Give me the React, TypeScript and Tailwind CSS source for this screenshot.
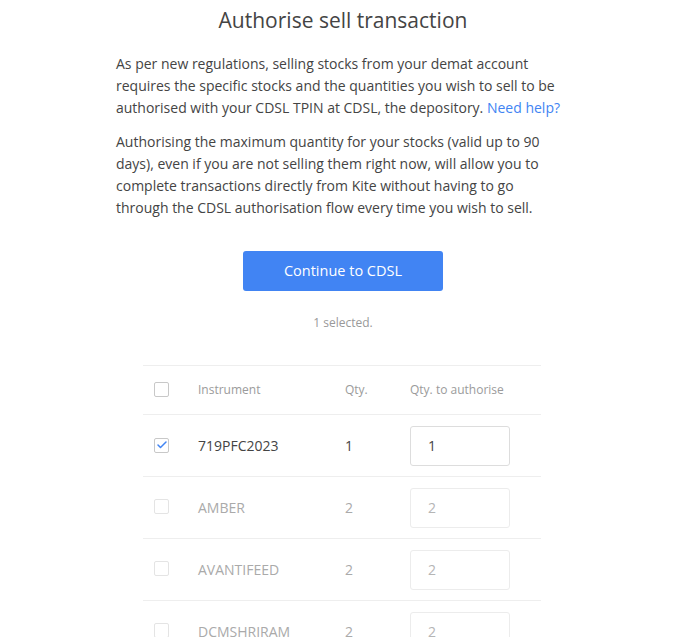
import { Check } from 'lucide-react';

type Row = {
  symbol: string;
  qty: number;
  selected: boolean;
};

const rows: Row[] = [
  { symbol: '719PFC2023', qty: 1, selected: true },
  { symbol: 'AMBER', qty: 2, selected: false },
  { symbol: 'AVANTIFEED', qty: 2, selected: false },
  { symbol: 'DCMSHRIRAM', qty: 2, selected: false },
];

function Box({ checked, faded }: { checked: boolean; faded?: boolean }) {
  return (
    <span
      className={[
        'inline-flex h-[15px] w-[15px] items-center justify-center rounded-[2px] border bg-white',
        faded ? 'border-[#e4e4e4]' : 'border-[#c8c8c8]',
      ].join(' ')}
    >
      {checked && <Check size={12} strokeWidth={3} className="text-[#4184f3]" />}
    </span>
  );
}

export default function App() {
  return (
    <div className="min-h-screen bg-white font-['Open_Sans',sans-serif] text-[#444]">
      <div className="mx-auto w-[454px] pt-[5px]">
        <h1 className="text-center text-[21px] font-normal leading-[30px] text-[#444]">
          Authorise sell transaction
        </h1>

        <p className="mt-[18px] pr-[4px] text-[14px] leading-[22px]">
          As per new regulations, selling stocks from your demat account requires the specific
          stocks and the quantities you wish to sell to be authorised with your CDSL TPIN at CDSL,
          the depository. <a className="text-[#4184f3]">Need help?</a>
        </p>
        <p className="mt-[12px] pr-[4px] text-[14px] leading-[22px]">
          Authorising the maximum quantity for your stocks (valid up to 90 days), even if you are
          not selling them right now, will allow you to complete transactions directly from Kite
          without having to go through the CDSL authorisation flow every time you wish to sell.
        </p>

        <div className="mt-[32px] flex justify-center">
          <button
            type="button"
            className="h-[40px] w-[200px] rounded-[3px] bg-[#4184f3] text-[14.5px] text-white"
          >
            Continue to CDSL
          </button>
        </div>

        <p className="mt-[23px] text-center text-[12px] leading-[18px] text-[#999]">1 selected.</p>

        {/* holdings table */}
        <div className="mt-[33px] ml-[27px] w-[398px]">
          <div className="flex h-[50px] items-center border-y border-[#eee] text-[12px] text-[#9b9b9b]">
            <div className="w-[55px] pl-[11px] leading-none">
              <Box checked={false} />
            </div>
            <div className="w-[147px]">Instrument</div>
            <div className="w-[65px]">Qty.</div>
            <div>Qty. to authorise</div>
          </div>

          {rows.map((row) => (
            <div
              key={row.symbol}
              className={[
                'flex h-[62px] items-center border-b border-[#eee] text-[14px]',
                row.selected ? 'text-[#444]' : 'text-[#aaa]',
              ].join(' ')}
            >
              <div className="w-[55px] pl-[11px] leading-none">
                <Box checked={row.selected} faded={!row.selected} />
              </div>
              <div className="w-[147px]">{row.symbol}</div>
              <div className="w-[65px]">{row.qty}</div>
              <div
                className={[
                  'flex h-[40px] w-[100px] items-center rounded-[3px] border pl-[17px]',
                  row.selected ? 'border-[#ddd] text-[#444]' : 'border-[#ececec] text-[#b5b5b5]',
                ].join(' ')}
              >
                {row.qty}
              </div>
            </div>
          ))}
        </div>
      </div>
    </div>
  );
}
